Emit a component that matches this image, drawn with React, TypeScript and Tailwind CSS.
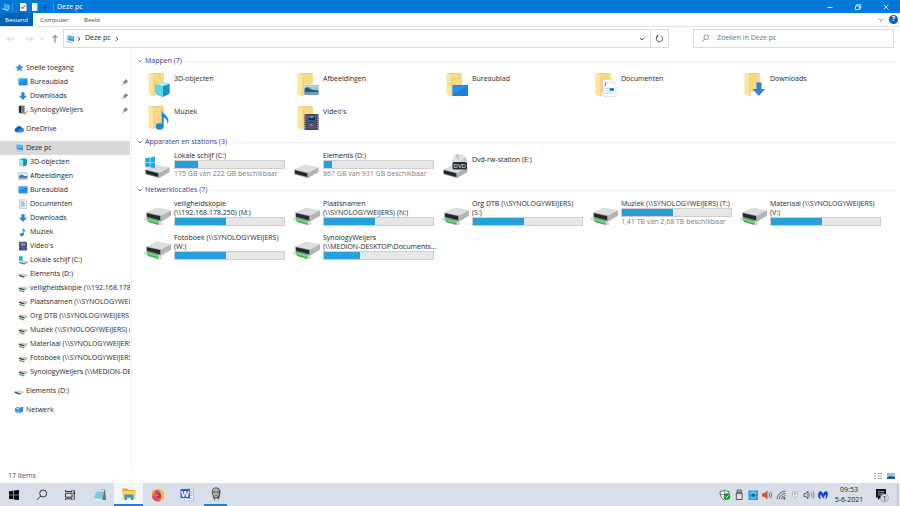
import type { ReactNode } from "react";

type Overlay = "cube" | "photo" | "desktop" | "doc" | "down" | "note" | "film";
type DriveKind = "windows" | "plain" | "dvd" | "network";

const folders: { name: string; overlay: Overlay }[] = [
  { name: "3D-objecten", overlay: "cube" },
  { name: "Afbeeldingen", overlay: "photo" },
  { name: "Bureaublad", overlay: "desktop" },
  { name: "Documenten", overlay: "doc" },
  { name: "Downloads", overlay: "down" },
  { name: "Muziek", overlay: "note" },
  { name: "Video's", overlay: "film" },
];

type Drive = {
  lines: string[];
  kind: DriveKind;
  used?: number;
  info?: string;
};

const devices: Drive[] = [
  { lines: ["Lokale schijf (C:)"], kind: "windows", used: 21, info: "175 GB van 222 GB beschikbaar" },
  { lines: ["Elements (D:)"], kind: "plain", used: 7, info: "867 GB van 931 GB beschikbaar" },
  { lines: ["Dvd-rw-station (E:)"], kind: "dvd" },
];

const network: Drive[] = [
  { lines: ["veiligheidskopie", "(\\\\192.168.178.250) (M:)"], kind: "network", used: 47 },
  { lines: ["Plaatsnamen", "(\\\\SYNOLOGYWEIJERS) (N:)"], kind: "network", used: 47 },
  { lines: ["Org DTB (\\\\SYNOLOGYWEIJERS)", "(S:)"], kind: "network", used: 47 },
  { lines: ["Muziek (\\\\SYNOLOGYWEIJERS) (T:)"], kind: "network", used: 47, info: "1,41 TB van 2,68 TB beschikbaar" },
  { lines: ["Materiaal (\\\\SYNOLOGYWEIJERS)", "(V:)"], kind: "network", used: 47 },
  { lines: ["Fotoboek (\\\\SYNOLOGYWEIJERS)", "(W:)"], kind: "network", used: 47 },
  { lines: ["SynologyWeijers", "(\\\\MEDION-DESKTOP\\Documents..."], kind: "network", used: 33 },
];

/* ---------- icons ---------- */

function PcIcon() {
  return (
    <svg viewBox="0 0 10 10" className="size-[10px] shrink-0">
      <path d="M2.6 1.2 9 2.6v5L2.6 6z" fill="#2f9bdc" />
      <path d="M3.2 2 8.4 3.1v1.8L3.2 4.6z" fill="#63c0f0" />
      <path d="M.6 7.4 3 6.6l5 1.6-1.8 1z" fill="#b8cbd8" />
    </svg>
  );
}

function SmallIcon({ kind }: { kind: string }) {
  const art: Record<string, ReactNode> = {
    star: (
      <path d="M5.6.8 6.7 3.3l2.8.2-2.1 1.9.6 2.8-2.5-1.3-2.4 1.5.4-2.8L1.1 4l2.9-.5z" fill="#3a93dd" />
    ),
    desktop: (
      <>
        <rect x=".6" y="1.6" width="9" height="6.8" fill="#1e8fe6" />
        <path d="M.6 1.6h9L.6 6z" fill="#3aa5f2" />
      </>
    ),
    down: <path d="M3.3 1.2h3.2v3.6h2.4L4.9 9 1 4.8h2.3z" fill="#2f86d8" />,
    synology: (
      <>
        <path d="M.8 1 3.6.6v8L.8 7.8z" fill="#222c3c" />
        <path d="M3.6.6h3v8h-3z" fill="#6d7886" />
        <path d="m5.4 7 1.6 2 2.6-3.4" stroke="#e8834a" strokeWidth="1.2" fill="none" />
      </>
    ),
    cloud: (
      <>
        <path d="M2.3 8.2a2.1 2.1 0 0 1-.2-4.1A3.2 3.2 0 0 1 8 3.7a2.3 2.3 0 0 1-.2 4.5z" fill="#0a63b8" />
        <path d="M2.3 8.2C4 5.8 6 4.9 9.3 4.7a2.1 2.1 0 0 1-1.5 3.5z" fill="#2a92e0" />
      </>
    ),
    cube: (
      <>
        <path d="M1 2.2 6.2.9 9 2.1v5.6L5.6 9.4 1 8z" fill="#25b4cf" />
        <path d="m1 2.2 4.3 1v6L1 8z" fill="#8fe6ef" />
        <path d="M5.3 3.2 9 2.1v5.6L5.3 9.3z" fill="#1594bb" />
      </>
    ),
    photo: (
      <>
        <rect x=".6" y="1.8" width="8.8" height="6.8" fill="#dfe9f1" stroke="#9aabb9" strokeWidth=".5" />
        <path d="M1.2 4.8 4 3.6l2 1.4h3v3H1.2z" fill="#3f7196" />
        <path d="M1.2 6.6h7.8V8H1.2z" fill="#86b6d8" />
      </>
    ),
    doc: (
      <>
        <path d="M1.6.8h5l2 1.8v6.8h-7z" fill="#eef3f7" stroke="#9aa9b5" strokeWidth=".6" />
        <path d="M3 3.2h3M3 5h4M3 6.8h4" stroke="#5d9dc9" strokeWidth=".9" />
      </>
    ),
    note: (
      <>
        <ellipse cx="3.800" cy="7.6" rx="2" ry="1.6" fill="#1789d8" />
        <path d="M4.800.6c.4 2 3.200 2.400 2.800 5.400-.3-1.400-1.200-1.800-1.900-2v3.800h-.9z" fill="#1789d8" />
      </>
    ),
    film: (
      <>
        <rect x="1" y=".8" width="8" height="8.600" fill="#373b45" />
        <rect x="2.600" y="1.600" width="4.800" height="3.200" fill="#7d90c0" />
        <rect x="2.600" y="5.400" width="4.800" height="3.200" fill="#4a63a5" />
        <path d="M1.700 1v8.200M8.300 1v8.200" stroke="#a7acb5" strokeWidth=".7" strokeDasharray=".9 .8" />
      </>
    ),
    windrive: (
      <>
        <path d="M1 1.2h3.6v4.6H1z" fill="#27b0ea" />
        <path d="m1.400 6.800 3.400-1.400 4.600 1.100-3.200 2z" fill="#cfd2d5" />
        <path d="m1.400 6.800 4.800 1.700v1L1.400 7.900zM6.200 8.500l3.200-2v1l-3.200 2z" fill="#61666b" />
      </>
    ),
    drive: (
      <>
        <path d="M.8 5.600 4 4.200l5.400 1.200-3.200 2.200z" fill="#d3d5d8" />
        <path d="m.8 5.600 5.400 2v1.200L.8 6.900z" fill="#3c4043" />
        <path d="m6.200 7.600 3.200-2.200v1.200L6.200 8.800z" fill="#a9adb1" />
      </>
    ),
    netdrive: (
      <>
        <path d="m1 4.600 3-1.200 5.400 1L6.500 6.200z" fill="#ccced1" />
        <path d="m1 4.600 5.500 1.600v1.300L1 6z" fill="#35393c" />
        <path d="m6.500 6.200 2.900-1.800v1.300L6.500 7.500z" fill="#999da1" />
        <path d="m1 6.800 5.400 1.400v1.200L1.400 8.200z" fill="#3fae52" />
      </>
    ),
    globe: (
      <>
        <path d="M4.400 3.400 9.200 1.400v4.800L5.600 8.600z" fill="#2c87cd" />
        <circle cx="3.800" cy="5" r="3" fill="#3d9bdc" />
        <path d="M2 3.600c1.200-1 2.600-.9 3.600-.2L4 4.800zM2.600 7c.6-.9 2.200-.8 2.800 0l-1 .9z" fill="#9fd6f5" />
      </>
    ),
  };
  if (kind === "pc") return <PcIcon />;
  return (
    <svg viewBox="0 0 10 10" className="size-[10px] shrink-0">
      {art[kind]}
    </svg>
  );
}

function FolderIcon({ overlay }: { overlay: Overlay }) {
  const art: Record<Overlay, ReactNode> = {
    cube: (
      <>
        <path d="m11.500 11.500 7-2.500 7 2v9.500L18.500 24l-7-3z" fill="#35bfd6" />
        <path d="m11.500 11.500 7-2.500 7 2-6.500 2.300z" fill="#b5f0f5" />
        <path d="m11.500 11.500 7.500 1.800V24l-7.500-3z" fill="#5fd6e4" />
        <path d="m19 13.300 6.500-2.300v9.500L19 24z" fill="#1593bd" />
      </>
    ),
    photo: (
      <>
        <rect x="11" y="11.500" width="15" height="11" fill="#eef4f8" />
        <rect x="11.500" y="12" width="14" height="10" fill="#8fc4ec" />
        <path d="M11.500 16c2-2.500 4-2 6 0 2 1.200 5 1 8 1.500v2h-14z" fill="#325f5a" />
        <path d="M11.500 19.200h14V22h-14z" fill="#6f9fc0" />
        <path d="M12 14c3-1.500 8-1.200 12 0" stroke="#dcedf9" strokeWidth=".8" fill="none" />
      </>
    ),
    desktop: (
      <>
        <rect x="10.500" y="12" width="15.500" height="11" fill="#1683dc" />
        <path d="M11 12.500h14.500L11 21.500z" fill="#2593ec" />
      </>
    ),
    doc: (
      <>
        <path d="M11.500 6.500h9l3.500 3v12.500H11.500z" fill="#f4f6f8" stroke="#c7ccd2" strokeWidth=".5" />
        <path d="M13 10h10l2 2v11.500H13z" fill="#fdfdfd" stroke="#c7ccd2" strokeWidth=".5" />
        <path d="M15 9.500 14 13" stroke="#3f9ae0" strokeWidth="1.200" />
        <rect x="18.500" y="15" width="4.500" height="3" fill="#2b82bf" />
        <path d="M14.500 15.500h3M14.500 17.500h3M14.500 20h8.500" stroke="#a9c3d8" strokeWidth=".7" />
      </>
    ),
    down: <path d="M16.500 9.500h5V16H25l-6.200 7L12.500 16h4z" fill="#2f86d8" />,
    note: (
      <>
        <ellipse cx="15.500" cy="20.500" rx="4" ry="3.200" fill="#128bdc" />
        <path d="M17.700 4c.5 4 7.600 6 6.700 11.500-.4 1.200-.9 1.800-1.400 2 .8-3.200-1.300-5.300-3.500-6v9h-1.800z" fill="#128bdc" />
      </>
    ),
    film: (
      <>
        <rect x="11.500" y="8" width="14" height="16" fill="#3a3e46" />
        <rect x="14" y="9" width="9" height="6.500" fill="#3e62ab" />
        <rect x="14" y="16.500" width="9" height="6.500" fill="#3454a0" />
        <path d="M15 14c1.500-3 2.500-3 4-1.500l3-2v4z" fill="#1f2c54" />
        <path d="M17.500 10h2v2h-2zM17.500 18h2v2h-2z" fill="#d98b45" />
        <path d="M15 21.500c2-2.500 5-2.500 7.500-.5v1.500H15z" fill="#87494d" />
        <path d="M12.700 8.500v15.200M24.300 8.500v15.200" stroke="#b8bcc3" strokeWidth="1" strokeDasharray="1.100 1" />
      </>
    ),
  };
  return (
    <svg viewBox="0 0 28 24" className="mt-[3px] h-6 w-7 shrink-0">
      <path d="M6.500 0h12.200c.5 0 .8.400.8.900V19H8z" fill="#eec765" />
      <path d="M8.500.5h11V19h-11z" fill="#f7d980" />
      <path d="M4.500 0h2.800l3.200 3.600V22.800l-1 1-5-2.300z" fill="#fae4a0" />
      <path d="M10.500 3.600v19.200l-1 1V4.500z" fill="#e9c86c" />
      {art[overlay]}
    </svg>
  );
}

function DriveIcon({ kind }: { kind: DriveKind }) {
  if (kind === "network") {
    return (
      <svg viewBox="0 0 28 24" className="mt-[3px] h-6 w-7 shrink-0">
        <path d="m0 15.500 16 4.500 2.500 1-.5 2-3 .3L0 18z" fill="#d4d8d6" />
        <path d="m2.500 14.500 12 3.500v5L4 20z" fill="#3db653" />
        <path d="m3.200 16.500 11 3v1.600l-10.500-3z" fill="#7fe08c" />
        <path d="M2.200 10.500 13 5.500l14 2.800-10 5.200z" fill="#dcdddf" />
        <path d="M2.200 10.500 17 13.500v6.200L2.500 15.500z" fill="#8f9296" />
        <path d="m2.900 11.300 13.100 2.900v4.100L3.100 14.800z" fill="#26292c" />
        <path d="m17 13.500 10-5.200v5.400l-10 6z" fill="#b3b5b8" />
      </svg>
    );
  }
  return (
    <svg viewBox="0 0 28 24" className="mt-[3px] h-6 w-7 shrink-0">
      <path d="M1.200 15.500 11 10.500l14.500 2.800L15 18.800z" fill="#dcdddf" />
      <path d="M1.200 15.500 15 18.800V24L1.500 20.300z" fill="#85888c" />
      <path d="M1.900 16.300 14 19.400v3.400L2.100 19.600z" fill="#222528" />
      <path d="m15 18.800 10.500-5.500v5L15 24z" fill="#b0b2b5" />
      {kind === "windows" && (
        <path
          d="M1.200 4.300 5.800 3.500v4.700H1.200zM6.400 3.400 11 2.500v5.700H6.400zM1.200 8.800h4.600v4.500l-4.600-.7zM6.400 8.800H11v5.300l-4.600-.7z"
          fill="#12ace9"
        />
      )}
      {kind === "dvd" && (
        <>
          <ellipse cx="17.500" cy="8" rx="7.500" ry="8" fill="#dfe3e2" />
          <path d="M17.500 8 13 1.500l3-1.300zM17.500 8l6-5 1.500 4z" fill="#b5cdbf" />
          <rect x="10.500" y="8" width="14.500" height="7.500" rx="1.500" fill="#2b2d30" />
          <text x="17.700" y="13.900" fontSize="6" textAnchor="middle" fill="#f2f2f2" fontFamily="Open Sans, sans-serif">
            DVD
          </text>
        </>
      )}
    </svg>
  );
}

function Chevron({ className }: { className: string }) {
  return (
    <svg viewBox="0 0 8 8" className={`size-2 shrink-0 fill-none ${className}`} stroke="currentColor">
      <path d="m2 2.800 2 2.200 2-2.200" />
    </svg>
  );
}

/* ---------- window chrome ---------- */

function TitleBar() {
  return (
    <header className="flex h-[13px] shrink-0 items-center bg-[#0078d7] text-white">
      <span className="pl-px">
        <svg viewBox="0 0 10 10" className="size-[10px]">
          <path d="M3 1.500 8.500 3v4.500L3 6z" fill="#39a9ea" />
          <path d="M.5 7 3 6.300l5 1.700-1.500 1z" fill="#a5d5f5" />
          <path d="M7.800 3v4.500" stroke="#a5d5f5" strokeWidth=".7" />
        </svg>
      </span>
      <span className="ml-px h-2 w-px bg-[#3c97e0]" />
      <button aria-label="Eigenschappen" className="ml-[5px]">
        <svg viewBox="0 0 10 10" className="size-[10px]">
          <path d="M2 1h5l1.500 1.500V9H2z" fill="#f6f3f2" />
          <path d="m3.200 5 1.300 1.500 2.700-3" stroke="#d2583e" strokeWidth="1.100" fill="none" />
        </svg>
      </button>
      <button aria-label="Nieuwe map" className="ml-0.5">
        <svg viewBox="0 0 10 10" className="size-[10px]">
          <path d="M2 1h5.500v8H2z" fill="#e3edf5" />
          <path d="M2 1h1.500v8H2z" fill="#fff" />
        </svg>
      </button>
      <button aria-label="Werkbalk aanpassen" className="ml-px">
        <svg viewBox="0 0 8 8" className="size-2">
          <path d="M2.500 2h3M2.300 4h3.400L4 5.900z" fill="#0b3c70" stroke="#0b3c70" strokeWidth=".6" />
        </svg>
      </button>
      <span className="ml-1 h-2 w-px bg-[#3c97e0]" />
      <h1 className="ml-[3px] flex-1 pt-px text-[7px]">Deze pc</h1>
      <button aria-label="Minimaliseren" className="flex w-7 justify-center">
        <svg viewBox="0 0 8 8" className="size-2"><path d="M1.500 4.500h5" stroke="#fff" strokeWidth=".8" /></svg>
      </button>
      <button aria-label="Verkleinen" className="flex w-7 justify-center">
        <svg viewBox="0 0 8 8" className="size-2" fill="none" stroke="#fff" strokeWidth=".8">
          <path d="M1.500 3h4v3.500h-4zM2.700 3V1.700h4v3.600H5.500" />
        </svg>
      </button>
      <button aria-label="Sluiten" className="flex w-7 justify-center">
        <svg viewBox="0 0 8 8" className="size-2"><path d="m1.500 1.500 5 5m0-5-5 5" stroke="#fff" strokeWidth=".8" /></svg>
      </button>
    </header>
  );
}

function Ribbon() {
  return (
    <nav className="flex h-[14px] shrink-0 items-stretch border-b border-[#e4e4e4] text-[6px] text-[#444]">
      <button className="w-[33px] bg-[#0063b1] pt-px text-white">Bestand</button>
      <button className="w-[43px] pt-px">Computer</button>
      <button className="w-8 pt-px">Beeld</button>
      <span className="flex-1" />
      <button aria-label="Lint uitvouwen" className="px-1 text-[#999]">
        <Chevron className="" />
      </button>
      <button aria-label="Help" className="mr-0.5 flex items-center">
        <span className="flex size-[9px] items-center justify-center rounded-full bg-[#0b63b5] text-[7px] font-bold text-white">
          ?
        </span>
      </button>
    </nav>
  );
}

function Arrow({ path, label, color }: { path: string; label: string; color: string }) {
  return (
    <button aria-label={label} className={color}>
      <svg viewBox="0 0 10 10" className="size-[10px] fill-none" stroke="currentColor" strokeWidth="1">
        <path d={path} />
      </svg>
    </button>
  );
}

function AddressRow() {
  return (
    <div className="flex shrink-0 items-center pt-0.5 pr-1.5 text-[7px]">
      <div className="flex w-[63px] items-center pl-1.5">
        <Arrow label="Vorige" path="M8.500 5h-7m2.500-2.500L1.500 5 4 7.500" color="text-[#d5d5d5]" />
        <span className="w-2" />
        <Arrow label="Volgende" path="M1.500 5h7M6 2.500 8.500 5 6 7.500" color="text-[#d5d5d5]" />
        <span className="w-1" />
        <Chevron className="text-[#d5d5d5]" />
        <span className="w-1" />
        <Arrow label="Omhoog" path="M5 8.500v-7M2.500 4 5 1.500 7.500 4" color="text-[#666]" />
      </div>
      <div className="flex h-[19px] flex-1 items-center border border-[#dcdcdc] pl-px">
        <PcIcon />
        <Chevron className="-rotate-90 text-[#555]" />
        <button className="ml-[2px] text-[#222]">Deze pc</button>
        <Chevron className="ml-[2px] -rotate-90 text-[#555]" />
        <span className="flex-1" />
        <button aria-label="Vorige locaties" className="px-1 text-[#444]">
          <Chevron className="" />
        </button>
        <button aria-label="Vernieuwen" className="flex h-full w-[18px] items-center justify-center border-l border-[#dcdcdc]">
          <svg viewBox="0 0 10 10" className="size-[9px] fill-none" stroke="#444" strokeWidth="1">
            <path d="M3.200 2.200a3.500 3.500 0 1 0 3.800.2M3.200.9v1.800H1.300" />
          </svg>
        </button>
      </div>
      <label className="ml-6 flex h-[19px] w-[201px] items-center border border-[#dcdcdc] pl-[7px]">
        <svg viewBox="0 0 10 10" className="size-[9px] fill-none" stroke="#777" strokeWidth=".8">
          <circle cx="6" cy="3.700" r="2.700" />
          <path d="M4 5.700.8 9" />
        </svg>
        <input
          aria-label="Zoeken in Deze pc"
          placeholder="Zoeken in Deze pc"
          className="ml-[7px] min-w-0 flex-1 outline-none placeholder:text-[#707070]"
        />
      </label>
    </div>
  );
}

/* ---------- navigation pane ---------- */

type NavRow = { icon: string; label: string; root?: boolean; pinned?: boolean; selected?: boolean };

const navGroups: NavRow[][] = [
  [
    { icon: "star", label: "Snelle toegang", root: true },
    { icon: "desktop", label: "Bureaublad", pinned: true },
    { icon: "down", label: "Downloads", pinned: true },
    { icon: "synology", label: "SynologyWeijers", pinned: true },
  ],
  [{ icon: "cloud", label: "OneDrive", root: true }],
  [
    { icon: "pc", label: "Deze pc", root: true, selected: true },
    { icon: "cube", label: "3D-objecten" },
    { icon: "photo", label: "Afbeeldingen" },
    { icon: "desktop", label: "Bureaublad" },
    { icon: "doc", label: "Documenten" },
    { icon: "down", label: "Downloads" },
    { icon: "note", label: "Muziek" },
    { icon: "film", label: "Video's" },
    { icon: "windrive", label: "Lokale schijf (C:)" },
    { icon: "drive", label: "Elements (D:)" },
    { icon: "netdrive", label: "veiligheidskopie (\\\\192.168.178.250)" },
    { icon: "netdrive", label: "Plaatsnamen (\\\\SYNOLOGYWEIJERS)" },
    { icon: "netdrive", label: "Org DTB (\\\\SYNOLOGYWEIJERS)" },
    { icon: "netdrive", label: "Muziek (\\\\SYNOLOGYWEIJERS) (T:)" },
    { icon: "netdrive", label: "Materiaal (\\\\SYNOLOGYWEIJERS)" },
    { icon: "netdrive", label: "Fotoboek (\\\\SYNOLOGYWEIJERS)" },
    { icon: "netdrive", label: "SynologyWeijers (\\\\MEDION-DESKTOP)" },
  ],
  [{ icon: "drive", label: "Elements (D:)", root: true }],
  [{ icon: "globe", label: "Netwerk", root: true }],
];

function Sidebar() {
  return (
    <aside className="flex w-[132px] shrink-0 flex-col gap-[5px] border-r border-[#f3f3f3] pt-[13px] pr-px">
      {navGroups.map((group, g) => (
        <ul key={g}>
          {group.map((row) => (
            <li key={row.label}>
              <button
                className={`flex h-[14px] w-full items-center overflow-hidden text-left whitespace-nowrap ${
                  row.root ? "pl-[14px]" : "pl-[18px]"
                } ${row.selected ? "bg-[#d9d9d9]" : ""}`}
              >
                <SmallIcon kind={row.icon} />
                <span className="ml-0.5 min-w-0 flex-1 overflow-hidden">{row.label}</span>
                {row.pinned && (
                  <svg viewBox="0 0 8 8" className="mr-px size-2 shrink-0">
                    <path d="m4.500 1 2.700 2.600-1 .3-1.400 1.400-.2 1.300L1.700 3.800 3 3.500l1.300-1.400z" fill="#76828e" />
                    <path d="M3 5.200 1.200 7" stroke="#76828e" strokeWidth=".8" />
                  </svg>
                )}
              </button>
            </li>
          ))}
        </ul>
      ))}
    </aside>
  );
}

/* ---------- file area ---------- */

function Section({ title, tall, children }: { title: string; tall?: boolean; children: ReactNode }) {
  return (
    <section className="mb-px">
      <h2 className="flex h-[10px] items-center text-[#2f3a96]">
        <Chevron className="mr-px text-[#888]" />
        {title}
        <span className="ml-1 h-px flex-1 bg-[#ededed]" />
      </h2>
      <div
        className={`grid grid-cols-[repeat(auto-fill,149px)] pt-1 pl-2 ${
          tall ? "auto-rows-[34px]" : "auto-rows-[33px]"
        }`}
      >
        {children}
      </div>
    </section>
  );
}

function DriveTile({ drive }: { drive: Drive }) {
  return (
    <div className="flex">
      <DriveIcon kind={drive.kind} />
      <div className={`ml-0.5 w-[111px] leading-[9px] ${drive.used === undefined ? "pt-1" : ""}`}>
        {drive.lines.map((line) => (
          <p key={line} className="whitespace-nowrap">
            {line}
          </p>
        ))}
        {drive.used !== undefined && (
          <div className="h-[9px] border border-[#cfcfcf] bg-[#e6e6e6]">
            <div className="h-full bg-[#26a0da]" style={{ width: `${drive.used}%` }} />
          </div>
        )}
        {drive.info && <p className="whitespace-nowrap text-[#7d7d7d]">{drive.info}</p>}
      </div>
    </div>
  );
}

function FileArea() {
  return (
    <main className="min-w-0 flex-1 pt-2 pr-1 pl-1">
      <Section title="Mappen (7)">
        {folders.map((f) => (
          <div key={f.name} className="flex">
            <FolderIcon overlay={f.overlay} />
            <p className="ml-0.5 pt-1 leading-[10px]">{f.name}</p>
          </div>
        ))}
      </Section>
      <Section title="Apparaten en stations (3)">
        {devices.map((d) => (
          <DriveTile key={d.lines[0]} drive={d} />
        ))}
      </Section>
      <Section title="Netwerklocaties (7)" tall>
        {network.map((d) => (
          <DriveTile key={d.lines[0]} drive={d} />
        ))}
      </Section>
    </main>
  );
}

/* ---------- bottom ---------- */

function StatusBar() {
  return (
    <footer className="flex h-[14px] shrink-0 items-center pr-1 pl-2 text-[#3d5068]">
      <span className="flex-1">17 items</span>
      <button aria-label="Details" className="mr-[3px]">
        <svg viewBox="0 0 10 10" className="size-[10px]">
          <path d="M1 2.500h2M1 5h2M1 7.500h2M4.500 2.500H9M4.500 5H9M4.500 7.500H9" stroke="#8d9298" strokeWidth=".8" />
        </svg>
      </button>
      <button aria-label="Grote pictogrammen">
        <svg viewBox="0 0 10 10" className="size-[10px]">
          <rect x="1" y="2" width="8" height="6" fill="#8fc3e8" />
          <path d="M1 6.500 4 5l5 1v2H1z" fill="#245a87" />
        </svg>
      </button>
    </footer>
  );
}

function TrayButton({ label, children }: { label: string; children: ReactNode }) {
  return (
    <button aria-label={label} className="flex w-[14px] items-center justify-center">
      <svg viewBox="0 0 12 12" className="size-3 fill-none">
        {children}
      </svg>
    </button>
  );
}

function Taskbar() {
  return (
    <div className="flex h-[23px] shrink-0 items-stretch bg-[#d8dfe8]">
      <button aria-label="Start" className="flex w-7 items-center justify-center">
        <svg viewBox="0 0 10 10" className="size-[10px]">
          <path d="M0 1.300 4.300.7v4H0zM4.900.6 10 0v4.700H4.900zM0 5.300h4.300v4L0 8.700zM4.900 5.300H10V10l-5.100-.6z" fill="#0b0b0b" />
        </svg>
      </button>
      <button aria-label="Zoeken" className="flex w-7 items-center justify-center">
        <svg viewBox="0 0 12 12" className="size-3 fill-none" stroke="#222" strokeWidth=".9">
          <circle cx="7.200" cy="4.500" r="3.500" />
          <path d="M4.700 7 1 10.800" />
        </svg>
      </button>
      <button aria-label="Taakweergave" className="flex w-7 items-center justify-center">
        <svg viewBox="0 0 12 12" className="size-3 fill-none" stroke="#222" strokeWidth=".9">
          <path d="M1.500 1v1.500H8V1M1.500 4.200H8v4H1.500zM1.500 11V9.800H8V11M10.200 1v10" />
          <path d="M9.500 4h1.500" strokeWidth="1.600" />
        </svg>
      </button>
      <button aria-label="Kladblok" className="ml-px flex w-[29px] items-center justify-center">
        <svg viewBox="0 0 14 14" className="size-[14px]">
          <path d="m4.500 2 7.500-.5 1 10.500H9z" fill="#4d7884" />
          <path d="M4.500 2h6.800L9.500 11.500.8 10.500z" fill="#82c8d6" />
          <path d="M4.500 2h6.800l-.3 1.500-6.800-.3z" fill="#d7eef2" />
          <path d="m.8 10.500 8.700 1v.9L1 11.500z" fill="#f4f8f9" />
        </svg>
      </button>
      <button
        aria-label="Verkenner"
        className="flex w-[29px] items-center justify-center border-b-2 border-[#1883d7] bg-[#f3f6fa]"
      >
        <svg viewBox="0 0 14 14" className="size-[14px]">
          <path d="M.5 1.500h4.500l1.200 1.500h7.300v3H.5z" fill="#e9a62a" />
          <path d="M.5 4h13v8H.5z" fill="#fbd35b" />
          <path d="M2.500 7.500h9V13H9v-2.500H5V13H2.500z" fill="#3497de" />
        </svg>
      </button>
      <button aria-label="Firefox" className="flex w-[29px] items-center justify-center">
        <svg viewBox="0 0 14 14" className="size-[14px]">
          <circle cx="7" cy="7.400" r="6" fill="#f4512c" />
          <path d="M7 1c4.500 0 6.500 3.500 6 7-.4 3-2.800 5.300-5.500 5.400C11 11 11 7 9.500 5.200 8.800 3.500 8 2.300 7 1z" fill="#fdbd2c" />
          <path d="M1.200 7C1 4.500 2 3 3 2.200c.2 1 .6 1.500 1.400 1.800C3 5.500 3 7 3.400 8.500z" fill="#ff8a1f" />
          <circle cx="7.200" cy="7.200" r="2.800" fill="#7641c9" />
          <path d="M4.200 7c1-.9 2.300-.2 3.300-.3-.6 1.200-1.800 1.200-2.300 1.900z" fill="#ff9526" />
          <path d="M1.200 8.500c1 3.300 3.800 4.900 6.300 4.900-2.600-.6-4.500-2-5.200-4.200z" fill="#e2236d" />
        </svg>
      </button>
      <button aria-label="Word" className="flex w-[29px] items-center justify-center">
        <svg viewBox="0 0 14 14" className="size-[14px]">
          <path d="M4.500 1h9v11.500h-9z" fill="#f3f7fc" stroke="#8aa9d6" strokeWidth=".5" />
          <path d="M10 3.500h2.500M10 5.500h2.500M10 7.500h2.500M6 10.500h6.500" stroke="#7ea3dc" strokeWidth=".8" />
          <path d="M.5 1h9.500v9H.5z" fill="#2b63c4" />
          <text x="5.200" y="8.700" fontSize="8.500" fontWeight="700" textAnchor="middle" fill="#fff" fontFamily="Open Sans, sans-serif">
            W
          </text>
        </svg>
      </button>
      <button aria-label="Portret" className="flex w-[29px] items-stretch justify-center px-[3px]">
        <span className="flex flex-1 items-center justify-center border-b-2 border-[#1883d7]">
          <svg viewBox="0 0 14 14" className="size-[14px]">
            <path d="M2.800 5.500C2.600 2.300 4.600.5 7 .5s4.600 1.700 4.400 5L10.600 10 9 13.500H5.500L4 10z" fill="#45423f" />
            <path d="M3.600 4.500C3.800 2.200 5.200 1.300 7 1.300s3 1 3 3.200L9.500 9 7 10.800 4.500 9z" fill="#bdb6ad" />
            <path d="M4.300 5h2.200M7.400 5h2.200" stroke="#1d1b1a" strokeWidth="1" />
            <path d="M5.500 8.400h3" stroke="#524a45" strokeWidth=".7" />
            <path d="M5.500 11.500h3.600v2H6z" fill="#e6e6e6" />
          </svg>
        </span>
      </button>

      <span className="flex-1" />

      <TrayButton label="Beveiliging">
        <path d="M1 2.500C3 2.500 4.500 1.800 5.500 1c1 .8 2.500 1.500 4.500 1.500 0 4.500-1.500 7-4.500 8.500C2.500 9.500 1 7 1 2.500z" fill="#f5f7f5" stroke="#333" strokeWidth=".7" />
        <path d="M5.500 2v8M1.500 5.500h8" stroke="#333" strokeWidth=".5" />
        <circle cx="8" cy="7.500" r="3.200" fill="#18903a" />
        <path d="m6.500 7.500 1.200 1.200 1.900-2.300" stroke="#fff" strokeWidth=".9" />
      </TrayButton>
      <TrayButton label="Hardware veilig verwijderen">
        <path d="M4.200 1h4v3h-4zM3.300 4h5.800v6.500H3.300z" stroke="#333" strokeWidth=".8" />
        <path d="M5.300 2.500h.5M6.700 2.500h.5" stroke="#333" strokeWidth=".8" />
      </TrayButton>
      <TrayButton label="Grafische instellingen">
        <rect x="1.500" y="1.500" width="9.500" height="9.500" fill="#2b9ad8" />
        <path d="M3 4.500c2-2 5-1.500 6.500.500M3.500 8.500c2 1.500 4.500 1 6-1" stroke="#b9e4fa" strokeWidth="1" />
        <circle cx="6.200" cy="6.300" r="1.300" fill="#0e5f9e" />
      </TrayButton>
      <TrayButton label="Geluidsbeheer">
        <path d="M1 4.300h2.300L6.500 1.500v9L3.300 7.700H1z" fill="#c95532" />
        <path d="M7.800 4c.9 1.200.9 2.800 0 4M9.300 2.500c1.600 2.200 1.600 4.800 0 7" stroke="#8a5545" strokeWidth=".9" />
      </TrayButton>
      <TrayButton label="Wifi">
        <path d="M2 10.200a8.500 8.500 0 0 1 8.500-8M4.200 10.300a6.300 6.300 0 0 1 6.300-5.800M6.400 10.300a4 4 0 0 1 4.100-3.600" stroke="#444" strokeWidth=".8" />
        <circle cx="9.300" cy="9.500" r="1" fill="#333" />
      </TrayButton>
      <TrayButton label="Locatie">
        <path d="M3.500 3h5v3.500L6 9.300 3.500 6.500z" fill="#f3f3ee" stroke="#a9aca8" strokeWidth=".8" />
        <circle cx="6" cy="5" r=".9" fill="#89908a" />
      </TrayButton>
      <TrayButton label="Volume">
        <path d="M1 4.500h1.700L5 2.300v7.400L2.700 7.500H1z" stroke="#333" strokeWidth=".8" />
        <path d="M6.500 4.700c.5.800.5 1.800 0 2.600M8.200 3.400c1 1.600 1 3.600 0 5.200M9.900 2.200c1.500 2.300 1.500 5.300 0 7.600" stroke="#666" strokeWidth=".7" />
      </TrayButton>
      <TrayButton label="Malwarebytes">
        <path d="M1.200 7.500C.8 4 2 2.200 3.600 2.200c1.100 0 1.800 1.300 2.600 2.900.7-1.700 1.600-2.900 2.700-2.900 1.700 0 2.500 2 1.500 5.600C9.800 9.300 9 10 8 10c1.200-1.800 1-3.300.600-4.500L6.200 9.500 3.700 5.300c-.6 1.500-.5 2.800.3 4.500C2.500 9.800 1.500 9 1.200 7.500z" fill="#1545d6" />
      </TrayButton>
      <button className="w-[38px] text-center leading-[10px] text-[#222]">
        <time>
          <span className="block">09:53</span>
          <span className="block">5-6-2021</span>
        </time>
      </button>
      <button aria-label="Meldingen (1)" className="flex w-7 items-center justify-center">
        <svg viewBox="0 0 16 16" className="size-4">
          <path d="M2 2h10v8.500H6.500L4 13v-2.500H2z" fill="#161616" />
          <path d="M4 4.500h6M4 6.300h6M4 8h4" stroke="#d8dfe8" strokeWidth=".6" />
          <circle cx="10.500" cy="11" r="4" fill="#d5dbe2" stroke="#7f868e" strokeWidth=".6" />
          <text x="10.500" y="13.500" fontSize="7" textAnchor="middle" fill="#111" fontFamily="Open Sans, sans-serif">
            1
          </text>
        </svg>
      </button>
      <span className="mr-0.5 ml-px w-px bg-[#b4bcc6]" />
    </div>
  );
}

export default function App() {
  return (
    <div className="flex h-screen flex-col overflow-hidden bg-white font-['Open_Sans',sans-serif] text-[7px] text-[#262626]">
      <TitleBar />
      <Ribbon />
      <AddressRow />
      <div className="flex min-h-0 flex-1">
        <Sidebar />
        <FileArea />
      </div>
      <StatusBar />
      <Taskbar />
    </div>
  );
}
